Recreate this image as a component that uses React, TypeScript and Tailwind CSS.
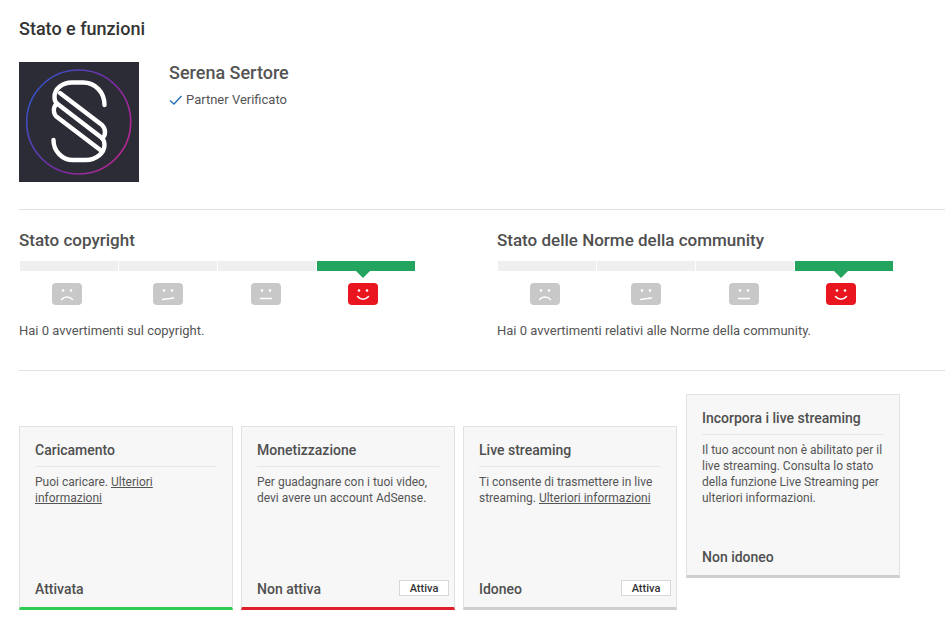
import React from 'react';

type Mood = 'sad' | 'meh' | 'flat' | 'happy';

// Smiley in the shape of the YouTube play button
function Face({ mood, active }: { mood: Mood; active?: boolean }) {
  const mouth: Record<Mood, string> = {
    sad: 'M9.5 16.5c3-3.4 8-3.4 11 0',
    meh: 'M9.5 16.5l11-1.6',
    flat: 'M9.5 15.5h11',
    happy: 'M9.5 13.5c3 3.6 8 3.6 11 0',
  };
  return (
    <svg width="30" height="22" viewBox="0 0 30 22" className="block">
      <rect width="30" height="22" rx="4" fill={active ? '#e9161f' : '#c8c8c8'} />
      <circle cx="11" cy="7.5" r="1.3" fill="#fff" />
      <circle cx="19" cy="7.5" r="1.3" fill="#fff" />
      <path d={mouth[mood]} fill="none" stroke="#fff" strokeWidth="1.5" strokeLinecap="round" />
    </svg>
  );
}

function StatusMeter({ title, text }: { title: string; text: string }) {
  const moods: { mood: Mood; shift: string }[] = [
    { mood: 'sad', shift: 'mr-[4px]' },
    { mood: 'meh', shift: 'mr-0' },
    { mood: 'flat', shift: 'mr-[2px]' },
    { mood: 'happy', shift: 'mr-[6px]' },
  ];
  return (
    <div className="w-[478px] shrink-0">
      <h2 className="text-[17px] leading-[20px] font-medium text-[#4f4f4f]">{title}</h2>
      <div className="mt-[11px] flex gap-px pl-px w-[396px]">
        {moods.map(({ mood, shift }) => (
          <div key={mood} className="flex-1 flex flex-col items-center">
            <div className={`h-[10px] w-full ${mood === 'happy' ? 'bg-[#23a45f]' : 'bg-[#efefef]'}`} />
            <div className={`mt-3 relative ${shift}`}>
              {mood === 'happy' && (
                <div className="absolute top-[-12px] left-1/2 -translate-x-1/2 h-0 w-0 border-x-[7px] border-t-[7px] border-x-transparent border-t-[#23a45f]" />
              )}
              <Face mood={mood} active={mood === 'happy'} />
            </div>
          </div>
        ))}
      </div>
      <p className="mt-[18px] text-[13px] leading-[16px] text-[#555]">{text}</p>
    </div>
  );
}

function Card({
  title,
  footer,
  bar,
  action,
  className,
  children,
}: {
  title: string;
  footer: string;
  bar: string;
  action?: boolean;
  className: string;
  children: React.ReactNode;
}) {
  return (
    <div className={`w-[214px] h-[184px] shrink-0 bg-[#f7f7f7] border-x border-t border-[#e2e2e2] border-b-[3px] flex flex-col pl-[15px] pr-[15px] ${bar} ${className}`}>
      <h3 className="pt-[13px] pb-[6px] text-[14px] leading-[20px] font-medium text-[#4f4f4f] border-b border-[#e6e6e6]">
        {title}
      </h3>
      <p className="mt-[7px] text-[12px] leading-[16px] text-[#555]">{children}</p>
      <div className="mt-auto flex items-center justify-between pb-[8px] relative">
        <span className="text-[14px] leading-[20px] font-medium text-[#4f4f4f]">{footer}</span>
        {action && (
          <button className="absolute right-[-10px] top-[1px] w-[50px] h-[16px] bg-white border border-[#d8d8d8] text-[11px] leading-[13px] font-medium text-[#333]">
            Attiva
          </button>
        )}
      </div>
    </div>
  );
}

export default function App() {
  return (
    <div className="w-[945px] h-[631px] overflow-hidden bg-white pl-[19px] font-['Roboto',sans-serif]">
      <h1 className="pt-[19px] text-[18px] leading-[20px] font-medium text-[#333]">Stato e funzioni</h1>

      <div className="mt-[23px] flex h-[148px] border-b border-[#e0e0e0]">
        <svg width="120" height="120" viewBox="0 0 120 120" className="block shrink-0">
          <defs>
            <linearGradient id="ring" x1="0" y1="0.2" x2="1" y2="0.8">
              <stop offset="0" stopColor="#2f55c8" />
              <stop offset="0.55" stopColor="#7a2da8" />
              <stop offset="1" stopColor="#c0268f" />
            </linearGradient>
          </defs>
          <rect width="120" height="120" fill="#2c2c36" />
          <circle cx="59.7" cy="60" r="52" fill="none" stroke="url(#ring)" strokeWidth="1.6" />
          <g fill="none" stroke="#fff" strokeWidth="4.4" strokeLinecap="round" strokeLinejoin="round">
            <path d="M85.5 43C85.5 30 76 20.5 64 20.5H53C43 20.5 35.5 27 35.5 35C35.5 37 36 40 38 41.5L83 76" />
            <path d="M41 31L83 63C85 65 86 68 86 70C86 73 85 75 83 76" />
            <path d="M38 41.5C35 44 34.5 47 35 50C35.5 52 36 54 38 55L82 88.5" />
            <path d="M34.5 78C34.5 89 43 98 54 98H67C77 98 85.5 91 85.5 83C85.5 80 85 78 83 76" />
          </g>
        </svg>
        <div className="ml-[30px] pt-[1px]">
          <div className="text-[18px] leading-[20px] font-medium text-[#555]">Serena Sertore</div>
          <div className="mt-[9px] flex items-center gap-[3px] text-[13px] leading-[16px] text-[#555]">
            <svg width="14" height="12" viewBox="0 0 14 12" className="block shrink-0">
              <path d="M1 6.5L5 10L12.5 2" fill="none" stroke="#1f6fb5" strokeWidth="1.3" />
            </svg>
            Partner Verificato
          </div>
        </div>
      </div>

      <div className="pt-[20px] h-[161px] flex border-b border-[#e0e0e0]">
        <StatusMeter title="Stato copyright" text="Hai 0 avvertimenti sul copyright." />
        <StatusMeter
          title="Stato delle Norme della community"
          text="Hai 0 avvertimenti relativi alle Norme della community."
        />
      </div>

      <div className="mt-[23px] flex gap-2">
        <Card title="Caricamento" footer="Attivata" bar="border-b-[#2ecc52]" className="mt-8">
          Puoi caricare. <span className="underline">Ulteriori informazioni</span>
        </Card>
        <Card title="Monetizzazione" footer="Non attiva" bar="border-b-[#e0202c]" action className="mt-8">
          Per guadagnare con i tuoi video, devi avere un account AdSense.
        </Card>
        <Card title="Live streaming" footer="Idoneo" bar="border-b-[#cfcfcf]" action className="mt-8">
          Ti consente di trasmettere in live streaming. <span className="underline">Ulteriori informazioni</span>
        </Card>
        <Card title="Incorpora i live streaming" footer="Non idoneo" bar="border-b-[#cfcfcf]" className="ml-px">
          Il tuo account non è abilitato per il live streaming. Consulta lo stato della funzione Live Streaming per ulteriori informazioni.
        </Card>
      </div>
    </div>
  );
}
